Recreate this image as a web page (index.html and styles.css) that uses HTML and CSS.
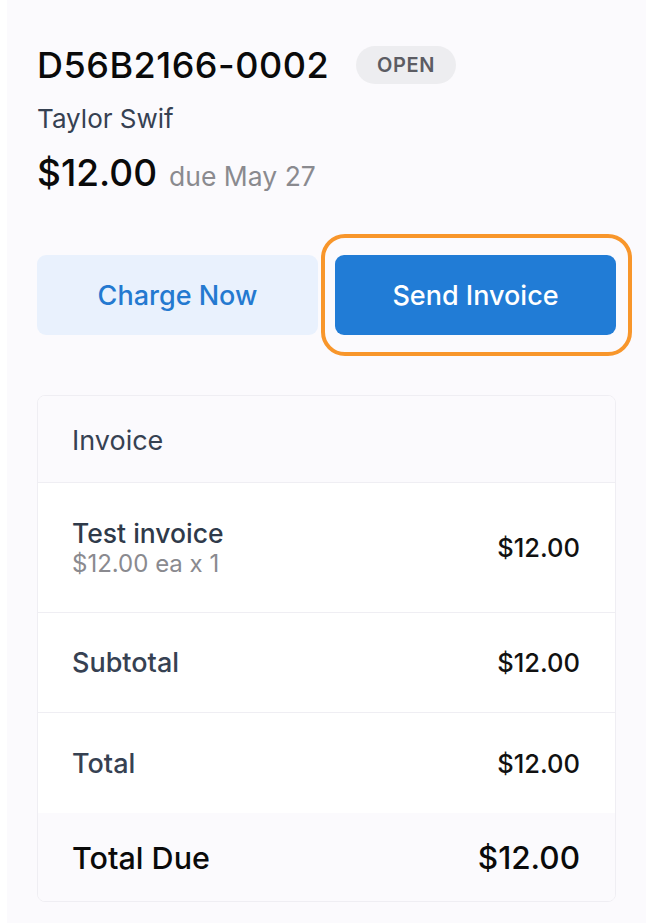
FILE: index.html
```html
<!DOCTYPE html>
<html lang="en">
<head>
<meta charset="utf-8">
<title>Invoice D56B2166-0002</title>
<link rel="stylesheet" href="styles.css">
</head>
<body>
<main class="page">
  <header class="summary">
    <div class="title-row">
      <h1 class="invoice-id">D56B2166-0002</h1>
      <span class="status">OPEN</span>
    </div>
    <p class="customer">Taylor Swif</p>
    <div class="amount-row">
      <span class="amount">$12.00</span>
      <span class="due">due May 27</span>
    </div>
  </header>

  <div class="actions">
    <button class="btn btn-secondary">Charge Now</button>
    <button class="btn btn-primary highlighted">Send Invoice</button>
  </div>

  <section class="card">
    <div class="card-header">Invoice</div>
    <div class="row row-item">
      <div class="item-info">
        <div class="item-name">Test invoice</div>
        <div class="item-meta">$12.00 ea x 1</div>
      </div>
      <div class="row-value">$12.00</div>
    </div>
    <div class="row row-line">
      <div class="row-label">Subtotal</div>
      <div class="row-value">$12.00</div>
    </div>
    <div class="row row-line row-last">
      <div class="row-label">Total</div>
      <div class="row-value">$12.00</div>
    </div>
    <div class="row row-due">
      <div class="due-label">Total Due</div>
      <div class="due-value">$12.00</div>
    </div>
  </section>
</main>
</body>
</html>
```

FILE: styles.css
```css
* {
  box-sizing: border-box;
}

html, body {
  margin: 0;
  padding: 0;
  background: #ffffff;
  height: 100%;
}

body {
  font-family: "Inter", "Liberation Sans", sans-serif;
  color: #111;
}

.page {
  margin-left: 7px;
  min-height: 100%;
  background: #fbfafd;
  padding: 43px 30px 20px 30px;
}

.title-row {
  display: flex;
  align-items: center;
  gap: 27px;
}

.invoice-id {
  margin: 0;
  font-size: 36px;
  line-height: 44px;
  font-weight: 500;
  color: #0a0a0a;
  letter-spacing: 0.5px;
}

.status {
  display: inline-flex;
  align-items: center;
  justify-content: center;
  width: 100px;
  height: 38px;
  border-radius: 19px;
  background: #ededf0;
  color: #5c5c63;
  font-size: 20px;
  font-weight: 600;
  letter-spacing: 0.6px;
}

.customer {
  margin: 16px 0 0 0;
  font-size: 26px;
  line-height: 32px;
  color: #364152;
}

.amount-row {
  margin-top: 16px;
  display: flex;
  align-items: baseline;
  gap: 12px;
}

.amount {
  font-size: 37px;
  line-height: 44px;
  font-weight: 500;
  color: #0a0a0a;
}

.due {
  font-size: 26.5px;
  color: #8a8a8f;
}

.actions {
  margin-top: 60px;
  display: grid;
  grid-template-columns: 1fr 1fr;
  gap: 17px;
}

.btn {
  height: 80px;
  border: none;
  border-radius: 9px;
  font-family: inherit;
  font-size: 27px;
  font-weight: 500;
  cursor: pointer;
}

.btn-secondary {
  background: #e9f1fd;
  color: #2479d0;
}

.btn-primary {
  background: #217cd6;
  color: #ffffff;
}

.highlighted {
  position: relative;
}

.highlighted::after {
  content: "";
  position: absolute;
  top: -21px;
  bottom: -21px;
  left: -14px;
  right: -16px;
  border: 4px solid #f8962b;
  border-radius: 24px;
  pointer-events: none;
}

.card {
  margin-top: 60px;
  background: #ffffff;
  border: 1px solid #efeef3;
  border-radius: 8px;
  overflow: hidden;
}

.card-header {
  height: 87px;
  display: flex;
  align-items: center;
  padding: 2px 34px 0 34px;
  background: #fbfafd;
  border-bottom: 1px solid #efeef3;
  font-size: 27px;
  color: #364152;
}

.row {
  display: flex;
  align-items: center;
  justify-content: space-between;
  padding: 0 35px 0 34px;
}

.row-item {
  height: 130px;
  border-bottom: 1px solid #efeef3;
}

.item-name {
  font-size: 26.5px;
  line-height: 32px;
  font-weight: 500;
  color: #2f3a4a;
}

.item-meta {
  margin-top: 1px;
  font-size: 24px;
  line-height: 28px;
  color: #8a8a8f;
}

.row-line {
  height: 100px;
  border-bottom: 1px solid #efeef3;
}

.row-last {
  border-bottom: none;
}

.row-label {
  font-size: 27px;
  font-weight: 500;
  color: #364152;
}

.row-value {
  font-size: 25.5px;
  font-weight: 500;
  color: #111;
}

.row-due {
  height: 88px;
  background: #fbfafd;
}

.due-label {
  font-size: 30.5px;
  font-weight: 500;
  color: #0a0a0a;
}

.due-value {
  font-size: 31.5px;
  font-weight: 500;
  color: #0a0a0a;
}
```
